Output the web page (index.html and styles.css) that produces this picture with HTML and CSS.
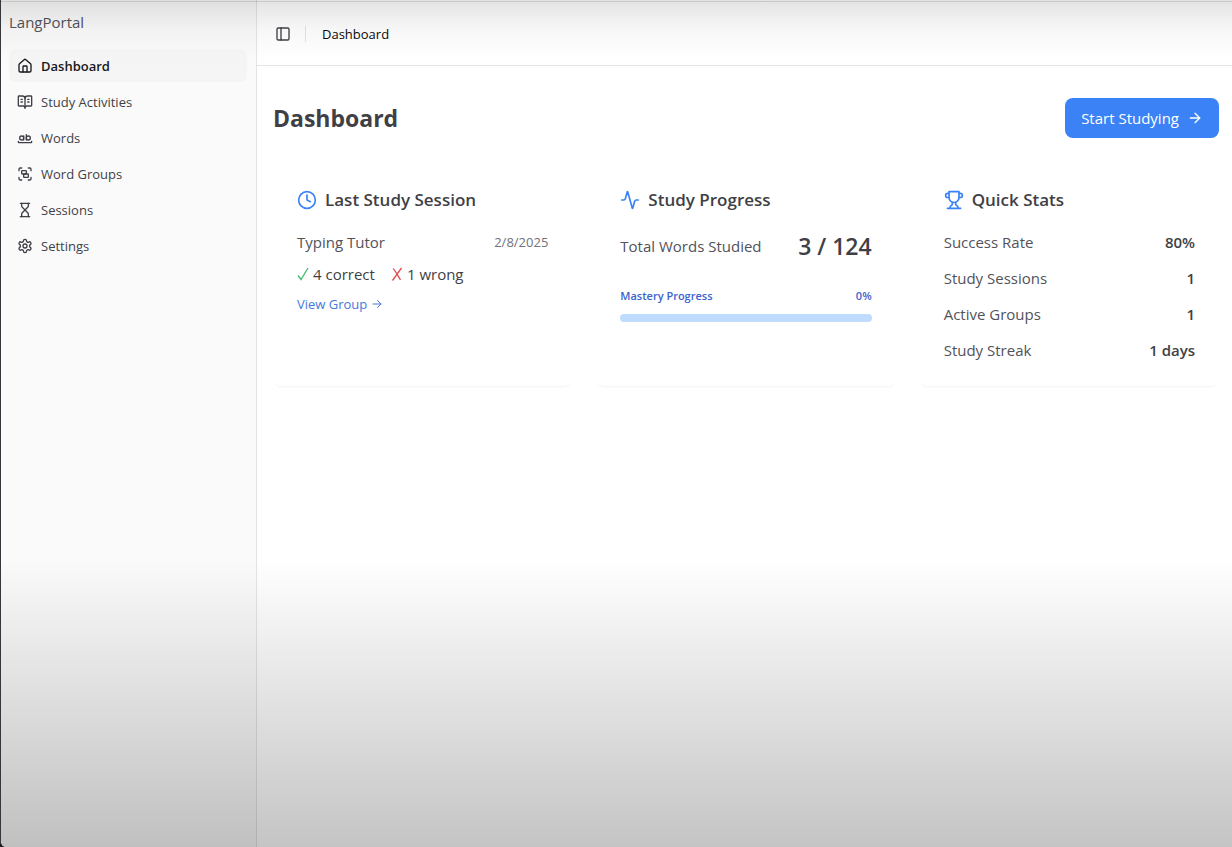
FILE: index.html
```html
<!DOCTYPE html>
<html lang="en">
<head>
<meta charset="utf-8">
<meta name="viewport" content="width=device-width, initial-scale=1">
<title>LangPortal</title>
<link rel="stylesheet" href="styles.css">
</head>
<body>
<div class="app">
  <aside class="sidebar">
    <div class="brand">LangPortal</div>
    <nav class="nav" aria-label="Main">
      <a class="nav-link active" href="#"><svg class="icon" viewBox="0 0 24 24"><path d="M15 21v-8a1 1 0 0 0-1-1h-4a1 1 0 0 0-1 1v8"/><path d="M3 10a2 2 0 0 1 .709-1.528l7-5.999a2 2 0 0 1 2.582 0l7 5.999A2 2 0 0 1 21 10v9a2 2 0 0 1-2 2H5a2 2 0 0 1-2-2z"/></svg>Dashboard</a>
      <a class="nav-link" href="#"><svg class="icon" viewBox="0 0 24 24"><path d="M12 7v14"/><path d="M16 12h2"/><path d="M16 8h2"/><path d="M3 18a1 1 0 0 1-1-1V4a1 1 0 0 1 1-1h5a4 4 0 0 1 4 4 4 4 0 0 1 4-4h5a1 1 0 0 1 1 1v13a1 1 0 0 1-1 1h-6a3 3 0 0 0-3 3 3 3 0 0 0-3-3z"/><path d="M6 12h2"/><path d="M6 8h2"/></svg>Study Activities</a>
      <a class="nav-link" href="#"><svg class="icon" viewBox="0 0 24 24"><circle cx="7" cy="12" r="3"/><path d="M10 9v6"/><circle cx="17" cy="12" r="3"/><path d="M14 7v8"/><path d="M22 17v1c0 .5-.5 1-1 1H3c-.5 0-1-.5-1-1v-1"/></svg>Words</a>
      <a class="nav-link" href="#"><svg class="icon" viewBox="0 0 24 24"><path d="M3 7V5c0-1.1.9-2 2-2h2"/><path d="M17 3h2c1.1 0 2 .9 2 2v2"/><path d="M21 17v2c0 1.1-.9 2-2 2h-2"/><path d="M7 21H5c-1.1 0-2-.9-2-2v-2"/><rect width="7" height="5" x="7" y="7" rx="1"/><rect width="7" height="5" x="10" y="12" rx="1"/></svg>Word Groups</a>
      <a class="nav-link" href="#"><svg class="icon" viewBox="0 0 24 24"><path d="M5 22h14"/><path d="M5 2h14"/><path d="M17 22v-4.172a2 2 0 0 0-.586-1.414L12 12l-4.414 4.414A2 2 0 0 0 7 17.828V22"/><path d="M7 2v4.172a2 2 0 0 0 .586 1.414L12 12l4.414-4.414A2 2 0 0 0 17 6.172V2"/></svg>Sessions</a>
      <a class="nav-link" href="#"><svg class="icon" viewBox="0 0 24 24"><path d="M12.22 2h-.44a2 2 0 0 0-2 2v.18a2 2 0 0 1-1 1.73l-.43.25a2 2 0 0 1-2 0l-.15-.08a2 2 0 0 0-2.73.73l-.22.38a2 2 0 0 0 .73 2.73l.15.1a2 2 0 0 1 1 1.72v.51a2 2 0 0 1-1 1.74l-.15.09a2 2 0 0 0-.73 2.73l.22.38a2 2 0 0 0 2.73.73l.15-.08a2 2 0 0 1 2 0l.43.25a2 2 0 0 1 1 1.73V20a2 2 0 0 0 2 2h.44a2 2 0 0 0 2-2v-.18a2 2 0 0 1 1-1.73l.43-.25a2 2 0 0 1 2 0l.15.08a2 2 0 0 0 2.73-.73l.22-.39a2 2 0 0 0-.73-2.73l-.15-.08a2 2 0 0 1-1-1.74v-.5a2 2 0 0 1 1-1.74l.15-.09a2 2 0 0 0 .73-2.73l-.22-.38a2 2 0 0 0-2.73-.73l-.15.08a2 2 0 0 1-2 0l-.43-.25a2 2 0 0 1-1-1.73V4a2 2 0 0 0-2-2z"/><circle cx="12" cy="12" r="3"/></svg>Settings</a>
    </nav>
  </aside>
  <div class="content">
    <header class="topbar">
      <button class="toggle" type="button" aria-label="Toggle sidebar"><svg class="icon" viewBox="0 0 24 24"><rect width="18" height="18" x="3" y="3" rx="2"/><path d="M9 3v18"/></svg></button>
      <span class="divider"></span>
      <span class="crumb">Dashboard</span>
    </header>
    <main class="main">
      <div class="heading">
        <h1 class="title">Dashboard</h1>
        <button class="start" type="button">Start Studying<svg class="icon" viewBox="0 0 24 24"><path d="M5 12h14"/><path d="m12 5 7 7-7 7"/></svg></button>
      </div>
      <div class="cards">
        <section class="card">
          <h2 class="card-title"><svg class="icon large" viewBox="0 0 24 24"><circle cx="12" cy="12" r="10"/><path d="M12 6v6l4 2"/></svg>Last Study Session</h2>
          <div class="session">
            <div class="row"><span>Typing Tutor</span><span class="date">2/8/2025</span></div>
            <div class="results">
              <span class="result"><svg class="mark good" viewBox="0 0 12 16"><path d="M1 9.500 4 13.500 11 2"/></svg>4 correct</span>
              <span class="result"><svg class="mark bad" viewBox="0 0 12 16"><path d="M2 2.500C4 4 7 10 9.500 14M10.500 2 1.500 14.500"/></svg>1 wrong</span>
            </div>
            <a class="view" href="#">View Group<svg class="icon small" viewBox="0 0 24 24"><path d="M4 12h16"/><path d="m13 5 7 7-7 7"/></svg></a>
          </div>
        </section>
        <section class="card">
          <h2 class="card-title"><svg class="icon large" viewBox="0 0 24 24"><path d="M22 12h-2.480a2 2 0 0 0-1.930 1.460l-2.350 8.360a.25.25 0 0 1-.48 0L9.240 2.180a.25.25 0 0 0-.48 0l-2.350 8.360A2 2 0 0 1 4.490 12H2"/></svg>Study Progress</h2>
          <div class="row"><span>Total Words Studied</span><strong class="total">3 / 124</strong></div>
          <div class="mastery">
            <div class="mastery-label"><span id="mastery">Mastery Progress</span><span>0%</span></div>
            <div class="track" role="progressbar" aria-labelledby="mastery" aria-valuenow="0" aria-valuemin="0" aria-valuemax="100"></div>
          </div>
        </section>
        <section class="card">
          <h2 class="card-title"><svg class="icon large" viewBox="0 0 24 24"><path d="M6 9H4.500a2.500 2.500 0 0 1 0-5H6"/><path d="M18 9h1.500a2.500 2.500 0 0 0 0-5H18"/><path d="M4 22h16"/><path d="M10 14.660V17c0 .55-.47.98-.97 1.210C7.850 18.750 7 20.240 7 22"/><path d="M14 14.660V17c0 .55.47.98.97 1.210C16.150 18.750 17 20.240 17 22"/><path d="M18 2H6v7a6 6 0 0 0 12 0V2Z"/></svg>Quick Stats</h2>
          <div class="stats">
            <div class="row"><span>Success Rate</span><strong>80%</strong></div>
            <div class="row"><span>Study Sessions</span><strong>1</strong></div>
            <div class="row"><span>Active Groups</span><strong>1</strong></div>
            <div class="row"><span>Study Streak</span><strong>1 days</strong></div>
          </div>
        </section>
      </div>
    </main>
  </div>
</div>
</body>
</html>
```
FILE: styles.css
```css
* {
  box-sizing: border-box;
}

body {
  margin: 0;
  background: #1d1d22;
  color: #3f3f46;
  font-family: "Segoe UI", "Open Sans", "Noto Sans", sans-serif;
  font-size: 15px;
  line-height: 24px;
}

h1,
h2 {
  margin: 0;
}

a {
  color: inherit;
  text-decoration: none;
}

button {
  border: 0;
  font: inherit;
  cursor: pointer;
}

.app {
  position: relative;
  display: flex;
  min-height: 100vh;
  overflow: hidden;
  border-left: 1px solid #36363d;
  border-bottom-left-radius: 6px;
  background: #fff;
}

/* Shading along the top and bottom of the window */
.app::after {
  content: "";
  position: absolute;
  inset: 0;
  background:
    linear-gradient(transparent 1px, rgba(0, 0, 0, 0.12) 1px, rgba(0, 0, 0, 0.12) 2px, transparent 2px),
    linear-gradient(rgba(0, 0, 0, 0.11), rgba(0, 0, 0, 0.03) 30px, transparent 60px),
    linear-gradient(transparent 66%, rgba(0, 0, 0, 0.23) 100%);
  pointer-events: none;
}

.icon {
  flex: none;
  width: 16px;
  height: 16px;
  fill: none;
  stroke: currentColor;
  stroke-width: 2;
  stroke-linecap: round;
  stroke-linejoin: round;
}

.large {
  width: 20px;
  height: 20px;
}

.small {
  width: 12px;
  height: 12px;
}

.sidebar {
  flex: none;
  width: 256px;
  padding: 10px 9px 8px 8px;
  border-right: 1px solid #e4e4e7;
  background: #fafafa;
}

.brand {
  margin-bottom: 16px;
  color: #52525b;
}

.nav {
  display: grid;
  gap: 4px;
}

.nav-link {
  display: flex;
  align-items: center;
  gap: 8px;
  height: 32px;
  padding: 0 8px;
  border-radius: 6px;
  font-size: 13px;
}

.active {
  background: #f5f5f5;
  color: #18181b;
  font-weight: 600;
}

.content {
  flex: 1;
  min-width: 0;
}

.topbar {
  display: flex;
  align-items: center;
  height: 66px;
  padding: 2px 16px 0 12px;
  border-bottom: 1px solid #e4e4e7;
}

.toggle {
  display: grid;
  place-items: center;
  width: 28px;
  height: 28px;
  padding: 0;
  background: none;
  color: #3f3f46;
}

.divider {
  width: 1px;
  height: 16px;
  margin: 0 16px 0 8px;
  background: #e4e4e7;
}

.crumb {
  color: #09090b;
  font-size: 13px;
}

.main {
  padding: 32px 13px 24px 16px;
}

.heading {
  display: flex;
  align-items: center;
  justify-content: space-between;
  margin-bottom: 24px;
}

.title {
  font-size: 23px;
  line-height: 32px;
}

.start {
  display: flex;
  align-items: center;
  gap: 8px;
  height: 40px;
  padding: 0 16px;
  border-radius: 8px;
  background: #3b82f6;
  color: #fff;
}

.cards {
  display: grid;
  grid-template-columns: repeat(3, 1fr);
  gap: 24px;
}

.card {
  padding: 24px;
  border-radius: 8px;
  background: #fff;
  box-shadow: 0 2px 2px -1px rgba(0, 0, 0, 0.05);
}

.card-title {
  display: flex;
  align-items: center;
  gap: 8px;
  margin-bottom: 16px;
  font-size: 17px;
  font-weight: 600;
  line-height: 28px;
}

.card-title .icon {
  color: #3b82f6;
}

.row {
  display: flex;
  align-items: center;
  justify-content: space-between;
  color: #52525b;
}

.row strong {
  color: #3f3f46;
  font-weight: 600;
}

.row .total {
  font-size: 23px;
  line-height: 32px;
}

.row .date {
  color: #71717a;
  font-size: 13px;
}

.session {
  display: grid;
  gap: 8px;
}

.results {
  display: flex;
  gap: 16px;
}

.result {
  display: flex;
  align-items: center;
  gap: 4px;
}

.mark {
  width: 12px;
  height: 16px;
  fill: none;
  stroke-width: 1.3;
}

.good {
  stroke: #3fbd72;
}

.bad {
  stroke: #e04f4f;
}

.view {
  display: flex;
  align-items: center;
  gap: 4px;
  justify-self: start;
  color: #4479dc;
  font-size: 13px;
  line-height: 20px;
}

.mastery {
  display: grid;
  gap: 10px;
  margin-top: 26px;
}

.mastery-label {
  display: flex;
  justify-content: space-between;
  color: #3b62cf;
  font-size: 11px;
  font-weight: 600;
  line-height: 16px;
}

.track {
  height: 8px;
  border-radius: 4px;
  background: #bfdbfe;
}

.stats {
  display: grid;
  gap: 12px;
}
```
